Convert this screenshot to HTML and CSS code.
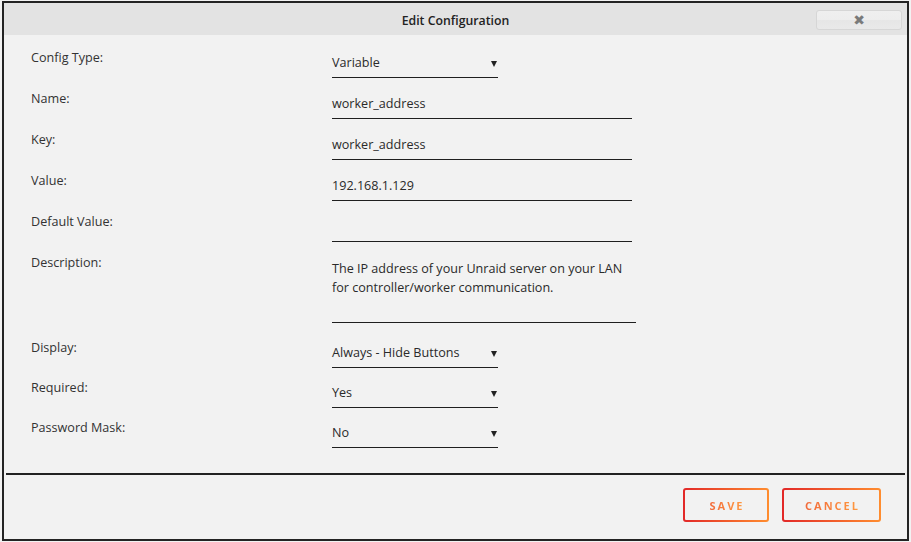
FILE: index.html
```html
<!DOCTYPE html>
<html>
<head>
<meta charset="utf-8">
<link rel="stylesheet" href="styles.css">
</head>
<body>
<div class="stage">
  <div class="dialog">
    <div class="titlebar">
      <span class="title">Edit Configuration</span>
      <button class="close">✖</button>
    </div>
    <div class="form">
      <div class="row">
        <div class="label">Config Type:</div>
        <div class="field select">Variable<span class="arrow"></span></div>
      </div>
      <div class="row">
        <div class="label">Name:</div>
        <div class="field text">worker_address</div>
      </div>
      <div class="row">
        <div class="label">Key:</div>
        <div class="field text">worker_address</div>
      </div>
      <div class="row">
        <div class="label">Value:</div>
        <div class="field text">192.168.1.129</div>
      </div>
      <div class="row">
        <div class="label">Default Value:</div>
        <div class="field text"></div>
      </div>
      <div class="row row-desc">
        <div class="label">Description:</div>
        <div class="field textarea">The IP address of your Unraid server on your LAN<br>for controller/worker communication.</div>
      </div>
      <div class="row row-short">
        <div class="label">Display:</div>
        <div class="field select">Always - Hide Buttons<span class="arrow"></span></div>
      </div>
      <div class="row row-short">
        <div class="label">Required:</div>
        <div class="field select">Yes<span class="arrow"></span></div>
      </div>
      <div class="row row-short">
        <div class="label">Password Mask:</div>
        <div class="field select">No<span class="arrow"></span></div>
      </div>
    </div>
    <div class="divider"></div>
    <div class="actions">
      <button class="btn btn-save"><span>SAVE</span></button>
      <button class="btn btn-cancel"><span>CANCEL</span></button>
    </div>
  </div>
</div>
</body>
</html>
```

FILE: styles.css
```css
html, body {
  margin: 0;
  padding: 0;
  background: #f2f2f2;
}

.stage {
  padding: 1px 0 0 2px;
  font-family: "Open Sans", "Noto Sans", sans-serif;
  color: #2b2b2b;
}

.dialog {
  box-sizing: border-box;
  width: 907px;
  height: 540px;
  border: 2px solid #232323;
  background: #f2f2f2;
  display: flex;
  flex-direction: column;
}

.titlebar {
  height: 32px;
  background: #e3e3e3;
  display: flex;
  align-items: flex-start;
  justify-content: center;
  position: relative;
}

.title {
  font-size: 12.3px;
  font-weight: 600;
  line-height: 16px;
  margin-top: 10px;
  color: #222;
}

.close {
  position: absolute;
  right: 5px;
  top: 7px;
  width: 86px;
  height: 20px;
  border: 1px solid #d6d6d6;
  border-radius: 3px;
  background: linear-gradient(#efefef 0%, #ededed 50%, #e6e6e6 51%, #e9e9e9 100%);
  color: #7a7a7a;
  font-size: 14px;
  line-height: 16px;
  padding: 0;
  font-family: "DejaVu Sans", sans-serif;
}

.form {
  padding: 6px 0 0 27px;
  display: flex;
  flex-direction: column;
}

.row {
  display: flex;
  height: 41px;
  font-size: 12.6px;
}

.row-desc {
  height: 85px;
}

.row-short {
  height: 40px;
}

.label {
  width: 301px;
  line-height: 18px;
  margin-top: 8px;
  color: #333;
}

.field {
  box-sizing: content-box;
  margin-top: 13px;
  height: 23px;
  line-height: 18px;
  border-bottom: 1px solid #1f1f1f;
  color: #2a2a2a;
  position: relative;
}

.text {
  width: 300px;
}

.select {
  width: 166px;
}

.textarea {
  width: 304px;
  height: 63px;
  line-height: 19px;
}

.arrow {
  position: absolute;
  right: 1px;
  top: 7px;
  width: 0;
  height: 0;
  border-left: 3px solid transparent;
  border-right: 3px solid transparent;
  border-top: 6px solid #222;
}

.divider {
  margin: 22px 2px 0 2px;
  height: 0;
  border-top: 2px solid #222;
}

.actions {
  display: flex;
  justify-content: flex-end;
  gap: 13px;
  padding: 13px 26px 0 0;
}

.btn {
  box-sizing: border-box;
  height: 34px;
  border: 2px solid transparent;
  border-radius: 3px;
  background:
    linear-gradient(#f2f2f2, #f2f2f2) padding-box,
    linear-gradient(90deg, #e22828, #ff8d2f) border-box;
  font-family: "Open Sans", "Noto Sans", sans-serif;
  font-size: 11px;
  font-weight: 700;
  letter-spacing: 2px;
  padding: 0 0 0 2px;
}

.btn span {
  background: linear-gradient(90deg, #f26a3a, #ff9a40);
  -webkit-background-clip: text;
  background-clip: text;
  color: transparent;
}

.btn-save {
  width: 86px;
}

.btn-cancel {
  width: 99px;
}
```
